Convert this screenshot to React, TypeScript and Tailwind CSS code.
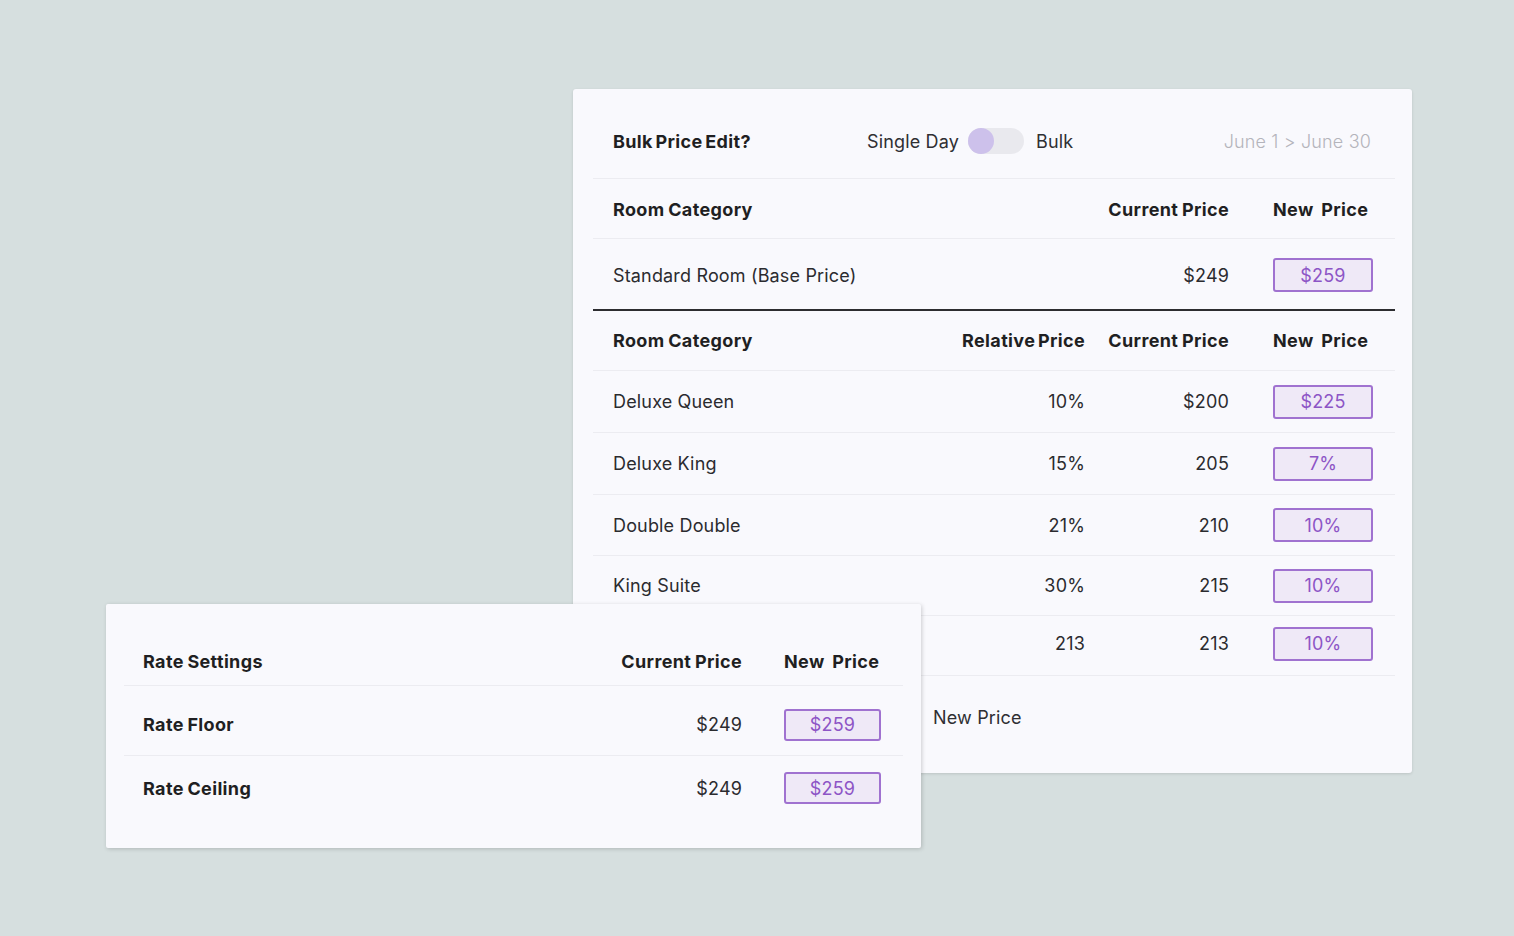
import React from "react";

const font = { fontFamily: "Inter, 'Noto Sans', sans-serif" };

function PriceBox({ value, w = "w-[100px]", h = "h-[34px]" }: { value: string; w?: string; h?: string }) {
  return (
    <div
      className={`${w} ${h} flex items-center justify-center rounded-[3px] border-2 border-[#a072d0] bg-[#efe9f7] text-[18px] tracking-[0.01em] text-[#8d55c6]`}
    >
      {value}
    </div>
  );
}

const rows = [
  { name: "Deluxe Queen", rel: "10%", cur: "$200", next: "$225", h: "h-[62px]" },
  { name: "Deluxe King", rel: "15%", cur: "205", next: "7%", h: "h-[62px]" },
  { name: "Double Double", rel: "21%", cur: "210", next: "10%", h: "h-[61px]" },
  { name: "King Suite", rel: "30%", cur: "215", next: "10%", h: "h-[60px]" },
  { name: "Queen Suite", rel: "213", cur: "213", next: "10%", h: "h-[60px] pb-[4px]" },
];

const head = "text-[18px] font-bold tracking-[0.02em] text-[#1f1f22]";
const ws = { wordSpacing: "-1px" };
const wsNew = { wordSpacing: "3px" };

export default function App() {
  return (
    <div
      className="relative w-[1514px] h-[936px] overflow-hidden bg-[#d6dfdf] text-[#2b2b2f]"
      style={font}
    >
      {/* Top card */}
      <div className="absolute left-[573px] top-[89px] w-[839px] h-[684px] rounded-[3px] bg-[#f9f9fd] shadow-[0_1px_3px_rgba(0,0,0,0.12)] pl-5 pr-[17px] tracking-[0.01em]">
        {/* Header */}
        <div className="flex h-[90px] items-center pt-[15px] pl-5 pr-[24px] border-b border-[#ececf1]">
          <div className={`w-[254px] ${head}`} style={{ wordSpacing: "-2px" }}>
            Bulk Price Edit?
          </div>
          <div className="flex items-center text-[18px] text-[#2f2f33]">
            <span>Single Day</span>
            <div className="ml-[9px] flex h-[26px] w-[56px] items-center rounded-full bg-[#e9e9ee]">
              <div className="h-[26px] w-[26px] rounded-full bg-[#cdc1eb]" />
            </div>
            <span className="ml-[12px]">Bulk</span>
          </div>
          <div className="ml-auto text-[18px] font-light text-[#b4b4bb]">June 1 &gt; June 30</div>
        </div>

        {/* Base header */}
        <div className={`flex h-[60px] items-center pt-[2px] pl-5 pr-[22px] border-b border-[#ececf1] ${head}`}>
          <div className="flex-1" style={ws}>Room Category</div>
          <div className="w-[144px] text-right" style={ws}>Current Price</div>
          <div className="ml-[44px] w-[100px]" style={wsNew}>
            New Price
          </div>
        </div>
        <div className="flex h-[72px] items-center pt-[2px] pl-5 pr-[22px] border-b-2 border-[#2d2d30] text-[18px]">
          <div className="flex-1">Standard Room (Base Price)</div>
          <div className="w-[144px] text-right">$249</div>
          <div className="ml-[44px]">
            <PriceBox value="$259" />
          </div>
        </div>

        {/* Relative header */}
        <div className={`flex h-[60px] items-center pl-5 pr-[22px] border-b border-[#ececf1] ${head}`}>
          <div className="flex-1" style={ws}>Room Category</div>
          <div className="w-[130px] text-right" style={{ wordSpacing: "-2px" }}>Relative Price</div>
          <div className="w-[144px] text-right" style={ws}>Current Price</div>
          <div className="ml-[44px] w-[100px]" style={wsNew}>
            New Price
          </div>
        </div>
        {rows.map((r) => (
          <div
            key={r.name}
            className={`flex ${r.h} items-center pl-5 pr-[22px] border-b border-[#ececf1] text-[18px]`}
          >
            <div className="flex-1">{r.name}</div>
            <div className="w-[130px] text-right">{r.rel}</div>
            <div className="w-[144px] text-right">{r.cur}</div>
            <div className="ml-[44px]">
              <PriceBox value={r.next} />
            </div>
          </div>
        ))}

        {/* Legend */}
        <div className="flex h-[82px] items-center pl-[340px] text-[18px] text-[#2f2f33]">
          <span>New Price</span>
        </div>
      </div>

      {/* Bottom card */}
      <div className="absolute left-[106px] top-[604px] w-[815px] h-[244px] rounded-[2px] bg-[#f9f9fd] shadow-[1px_1px_4px_rgba(0,0,0,0.18)] px-[18px] tracking-[0.01em]">
        <div className={`flex h-[82px] items-center pt-[34px] pl-[19px] pr-[22px] border-b border-[#ececf1] ${head}`}>
          <div className="flex-1" style={ws}>Rate Settings</div>
          <div className="w-[160px] text-right" style={ws}>Current Price</div>
          <div className="ml-[42px] w-[97px]" style={wsNew}>
            New Price
          </div>
        </div>
        <div className="flex h-[70px] items-center pt-[8px] pl-[19px] pr-[22px] border-b border-[#ececf1] text-[18px]">
          <div className={`flex-1 ${head}`} style={ws}>Rate Floor</div>
          <div className="w-[160px] text-right">$249</div>
          <div className="ml-[42px]">
            <PriceBox value="$259" w="w-[97px]" h="h-[32px]" />
          </div>
        </div>
        <div className="flex h-[64px] items-center pl-[19px] pr-[22px] text-[18px]">
          <div className={`flex-1 ${head}`} style={ws}>Rate Ceiling</div>
          <div className="w-[160px] text-right">$249</div>
          <div className="ml-[42px]">
            <PriceBox value="$259" w="w-[97px]" h="h-[32px]" />
          </div>
        </div>
      </div>
    </div>
  );
}
